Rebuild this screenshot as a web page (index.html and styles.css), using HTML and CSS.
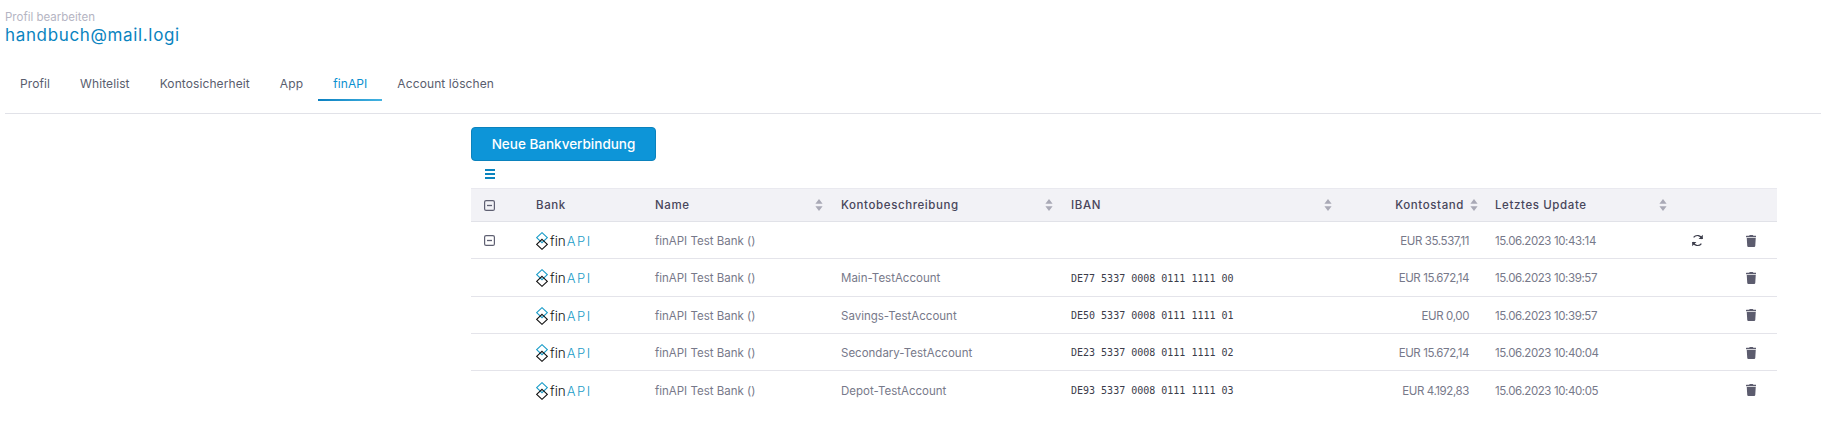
FILE: index.html
```html
<!DOCTYPE html>
<html lang="de">
<head>
    <meta charset="UTF-8">
    <title>Profil bearbeiten</title>
    <link rel="stylesheet" href="styles.css">
</head>
<body>
    <svg class="sprite" width="0" height="0">
        <symbol id="trash" viewBox="0 0 448 512"><path d="M432 32H312l-9.4-18.7A24 24 0 0 0 281.1 0H166.8a23.72 23.72 0 0 0-21.4 13.3L136 32H16A16 16 0 0 0 0 48v32a16 16 0 0 0 16 16h416a16 16 0 0 0 16-16V48a16 16 0 0 0-16-16zM53.2 467a48 48 0 0 0 47.9 45h245.8a48 48 0 0 0 47.9-45L416 128H32z"/></symbol>
        <symbol id="minus" viewBox="0 0 11 11"><rect x="0.6" y="0.6" width="9.8" height="9.8" rx="1.5" fill="none" stroke="currentColor" stroke-width="1.2"/><path d="M3 5.5h5" stroke="currentColor" stroke-width="1.3"/></symbol>
        <symbol id="sort" viewBox="0 0 8 12"><path d="M4 0l3.6 4.8H.4zM4 12L.4 7.2h7.2z"/></symbol>
        <symbol id="diamonds" viewBox="0 0 12 18">
            <path d="M6 .7L11.3 5.7 6 10.7 .7 5.7z" fill="none" stroke="#1a9cc8" stroke-width="1.1"/>
            <path d="M6 7.3L11.3 12.3 6 17.3 .7 12.3z" fill="none" stroke="#111" stroke-width="1.1"/>
        </symbol>
    </svg>

    <header class="page-head">
        <div class="subtitle">Profil bearbeiten</div>
        <h1>handbuch@mail.logi</h1>
    </header>

    <nav class="tabs">
        <a class="tab">Profil</a>
        <a class="tab">Whitelist</a>
        <a class="tab">Kontosicherheit</a>
        <a class="tab">App</a>
        <a class="tab active">finAPI</a>
        <a class="tab">Account löschen</a>
    </nav>

    <main class="content">
        <button class="btn-new">Neue Bankverbindung</button>
        <div class="menu-row">
            <span class="menu-icon"><i></i><i></i><i></i></span>
        </div>
        <table class="accounts">
            <colgroup>
                <col class="c-toggle"><col class="c-bank"><col class="c-name"><col class="c-desc"><col class="c-iban"><col class="c-balance"><col class="c-update"><col class="c-sync"><col class="c-del">
            </colgroup>
            <thead>
                <tr>
                    <th class="toggle"><svg class="ico-minus"><use href="#minus"/></svg></th>
                    <th>Bank</th>
                    <th><div class="th-in">Name<svg class="ico-sort"><use href="#sort"/></svg></div></th>
                    <th><div class="th-in">Kontobeschreibung<svg class="ico-sort"><use href="#sort"/></svg></div></th>
                    <th><div class="th-in">IBAN<svg class="ico-sort"><use href="#sort"/></svg></div></th>
                    <th class="balance-head"><div class="th-in th-end">Kontostand<svg class="ico-sort"><use href="#sort"/></svg></div></th>
                    <th><div class="th-in">Letztes Update<svg class="ico-sort"><use href="#sort"/></svg></div></th>
                    <th></th>
                    <th></th>
                </tr>
            </thead>
            <tbody>
                <tr>
                    <td class="toggle"><svg class="ico-minus"><use href="#minus"/></svg></td>
                    <td><span class="logo"><svg class="logo-mark"><use href="#diamonds"/></svg><span class="logo-fin">fin</span><span class="logo-api">API</span></span></td>
                    <td>finAPI Test Bank ()</td>
                    <td></td>
                    <td></td>
                    <td class="amount">EUR 35.537,11</td>
                    <td class="date">15.06.2023 10:43:14</td>
                    <td class="action">
                        <svg class="ico-sync" viewBox="0 0 12 12"><path d="M10.3 4.6A4.5 4.5 0 0 0 2.4 3.2M1.7 7.4a4.5 4.5 0 0 0 7.9 1.4" fill="none" stroke="currentColor" stroke-width="1.1"/><path d="M10.9 .8v3.9H7zM1.1 11.2V7.3H5z"/></svg>
                    </td>
                    <td class="action"><svg class="ico-trash"><use href="#trash"/></svg></td>
                </tr>
                <tr>
                    <td></td>
                    <td><span class="logo"><svg class="logo-mark"><use href="#diamonds"/></svg><span class="logo-fin">fin</span><span class="logo-api">API</span></span></td>
                    <td>finAPI Test Bank ()</td>
                    <td>Main-TestAccount</td>
                    <td class="iban">DE77 5337 0008 0111 1111 00</td>
                    <td class="amount">EUR 15.672,14</td>
                    <td class="date">15.06.2023 10:39:57</td>
                    <td></td>
                    <td class="action"><svg class="ico-trash"><use href="#trash"/></svg></td>
                </tr>
                <tr>
                    <td></td>
                    <td><span class="logo"><svg class="logo-mark"><use href="#diamonds"/></svg><span class="logo-fin">fin</span><span class="logo-api">API</span></span></td>
                    <td>finAPI Test Bank ()</td>
                    <td>Savings-TestAccount</td>
                    <td class="iban">DE50 5337 0008 0111 1111 01</td>
                    <td class="amount">EUR 0,00</td>
                    <td class="date">15.06.2023 10:39:57</td>
                    <td></td>
                    <td class="action"><svg class="ico-trash"><use href="#trash"/></svg></td>
                </tr>
                <tr>
                    <td></td>
                    <td><span class="logo"><svg class="logo-mark"><use href="#diamonds"/></svg><span class="logo-fin">fin</span><span class="logo-api">API</span></span></td>
                    <td>finAPI Test Bank ()</td>
                    <td>Secondary-TestAccount</td>
                    <td class="iban">DE23 5337 0008 0111 1111 02</td>
                    <td class="amount">EUR 15.672,14</td>
                    <td class="date">15.06.2023 10:40:04</td>
                    <td></td>
                    <td class="action"><svg class="ico-trash"><use href="#trash"/></svg></td>
                </tr>
                <tr>
                    <td></td>
                    <td><span class="logo"><svg class="logo-mark"><use href="#diamonds"/></svg><span class="logo-fin">fin</span><span class="logo-api">API</span></span></td>
                    <td>finAPI Test Bank ()</td>
                    <td>Depot-TestAccount</td>
                    <td class="iban">DE93 5337 0008 0111 1111 03</td>
                    <td class="amount">EUR 4.192,83</td>
                    <td class="date">15.06.2023 10:40:05</td>
                    <td></td>
                    <td class="action"><svg class="ico-trash"><use href="#trash"/></svg></td>
                </tr>
            </tbody>
        </table>
    </main>
</body>
</html>
```

FILE: styles.css
```css
body {
    font-family: Inter, "Open Sans", sans-serif;
    margin: 0;
    background-color: #fff;
    color: #77798a;
    overflow: hidden;
}
.sprite {
    position: absolute;
}
.page-head {
    padding: 10px 5px 0;
}
.subtitle {
    font-size: 11.5px;
    line-height: 14px;
    color: #b5b5c3;
}
h1 {
    margin: 0;
    font-size: 17px;
    line-height: 22px;
    font-weight: 400;
    letter-spacing: 0.65px;
    color: #0a84bf;
}
.tabs {
    display: flex;
    margin: 31px 0 0 5px;
    height: 36px;
    border-bottom: 1px solid #e1e2e8;
}
.tab {
    font-size: 12px;
    line-height: 14px;
    letter-spacing: 0.1px;
    padding: 0 15px;
    height: 24px;
    box-sizing: border-box;
    color: #595d6e;
}
.tab.active {
    color: #0a8fd0;
    border-bottom: 2px solid #1a95d2;
    border-image: linear-gradient(to right, #0a7fc0, #45b4e2) 1;
}
.content {
    padding: 13px 44px 0 471px;
}
.btn-new {
    display: block;
    width: 185px;
    height: 34px;
    padding: 0;
    font-family: inherit;
    font-size: 13.5px;
    font-weight: 500;
    color: #fff;
    background-color: #0d95d8;
    border: 1px solid #0b82bd;
    border-radius: 4px;
}
.menu-row {
    height: 27px;
    padding: 8px 0 0 14px;
    box-sizing: border-box;
}
.menu-icon {
    display: flex;
    flex-direction: column;
    gap: 2px;
    width: 10px;
}
.menu-icon i {
    height: 2px;
    background-color: #0a84bf;
}
.accounts {
    width: 1306px;
    table-layout: fixed;
    border-collapse: separate;
    border-spacing: 0;
    font-size: 11.5px;
}
.c-toggle { width: 50px; }
.c-bank { width: 119px; }
.c-name { width: 186px; }
.c-desc { width: 230px; }
.c-iban { width: 279px; }
.c-balance { width: 145px; }
.c-update { width: 190px; }
.c-sync { width: 55px; }
.c-del { width: 52px; }
.accounts th {
    height: 34px;
    padding: 0 3px 0 15px;
    text-align: left;
    font-size: 11.5px;
    font-weight: 500;
    letter-spacing: 0.6px;
    color: #48465b;
    background-color: #f2f2f6;
    border-top: 1px solid #e9e9ef;
    border-bottom: 1px solid #e1e2e8;
    box-sizing: border-box;
}
.accounts td {
    height: 37.25px;
    padding: 2px 15px 0;
    border-bottom: 1px solid #e4e4ea;
    box-sizing: border-box;
    white-space: nowrap;
}
.accounts tbody tr:last-child td {
    border-bottom: none;
}
.accounts .toggle {
    padding: 0 0 0 13px;
}
.th-in {
    display: flex;
    align-items: center;
    justify-content: space-between;
}
.th-end {
    justify-content: flex-end;
    gap: 6px;
}
.accounts .balance-head {
    padding: 0 2px 0 0;
}
.ico-sort {
    width: 8px;
    height: 12px;
    fill: #a9a9b6;
    flex: none;
}
.ico-minus {
    display: block;
    width: 11px;
    height: 11px;
    color: #5f6072;
}
.logo {
    display: flex;
    align-items: center;
    height: 18px;
}
.logo-mark {
    width: 12px;
    height: 18px;
    margin-right: 2px;
}
.logo-fin {
    font-size: 13.5px;
    font-weight: 300;
    color: #111;
}
.logo-api {
    font-size: 13px;
    font-weight: 300;
    letter-spacing: 1.6px;
    margin-left: 1px;
    color: #1a9cc8;
}
.iban {
    font-family: "DejaVu Sans Mono", monospace;
    font-size: 10px;
    color: #3b3c4a;
}
.accounts .amount {
    text-align: right;
    padding-right: 11px;
    letter-spacing: -0.4px;
}
.date {
    letter-spacing: -0.4px;
}
.accounts .action {
    text-align: center;
    padding: 0;
}
.ico-trash {
    display: inline-block;
    vertical-align: middle;
    width: 10.5px;
    height: 12px;
    fill: #5c5c6e;
}
.ico-sync {
    display: inline-block;
    vertical-align: middle;
    width: 13px;
    height: 13px;
    color: #3b3c4a;
    fill: #3b3c4a;
}
```
